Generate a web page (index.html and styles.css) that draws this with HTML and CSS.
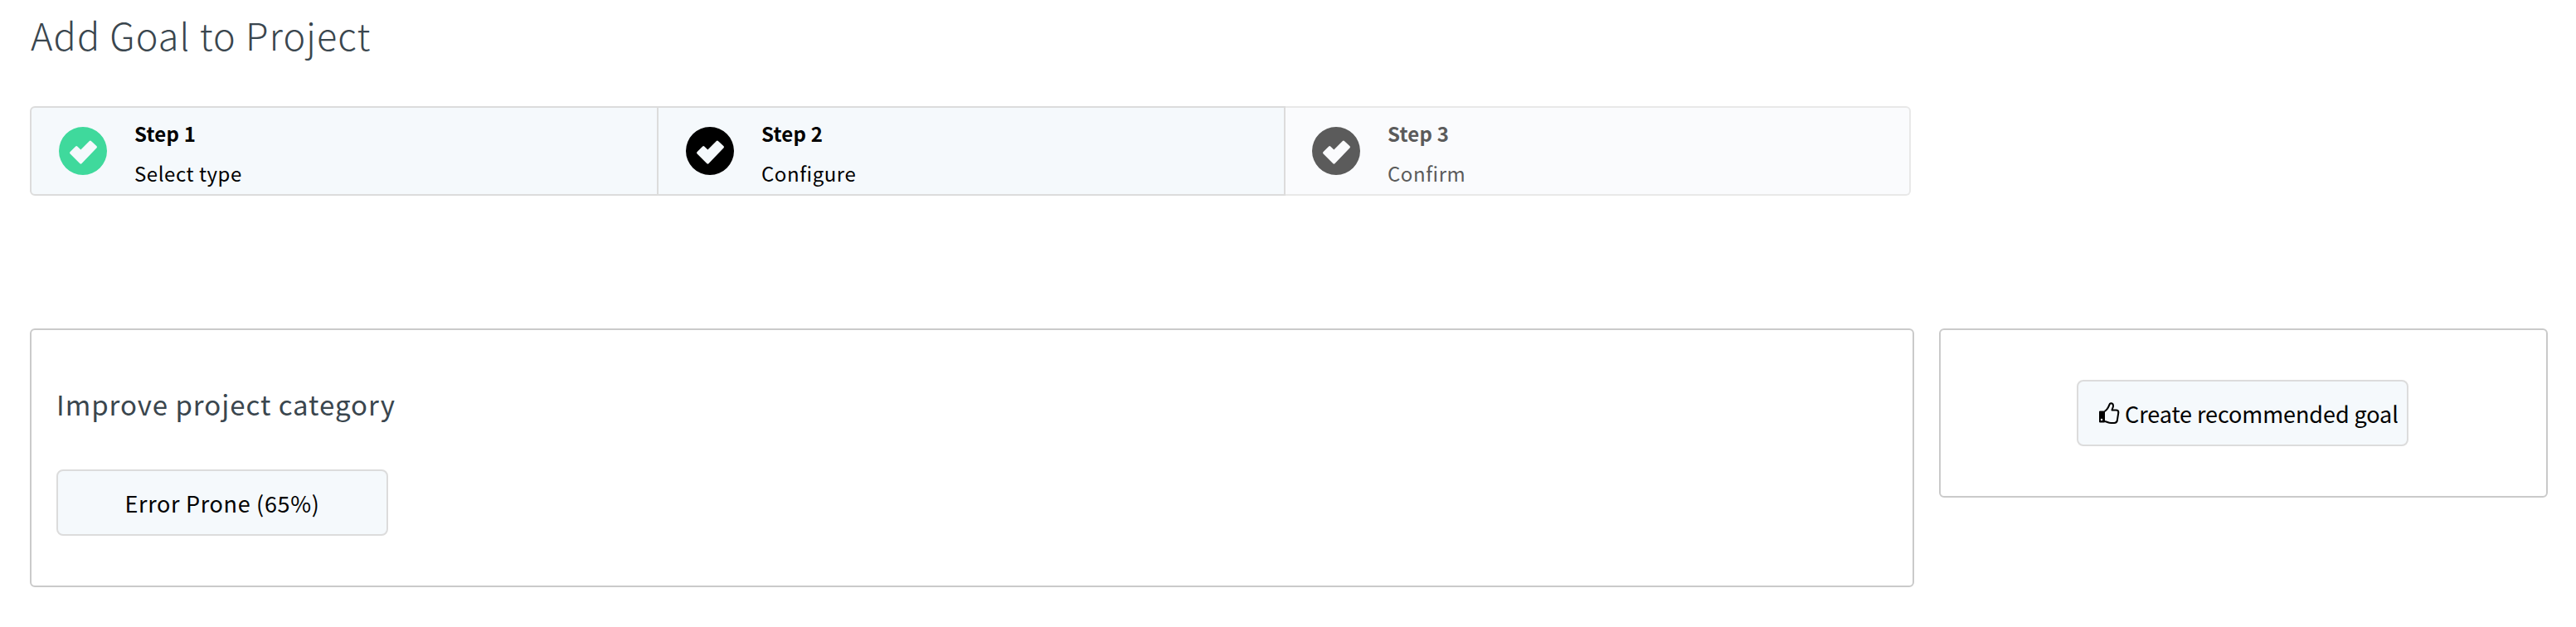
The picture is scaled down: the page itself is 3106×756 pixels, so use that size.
FILE: index.html
```
<!DOCTYPE html>
<html lang="en">
<head>
<meta charset="utf-8">
<title>Add Goal to Project</title>
<link rel="stylesheet" href="styles.css">
</head>
<body>
<svg width="0" height="0" class="defs"><defs>
<symbol id="check" viewBox="0 0 58 58"><path fill="currentColor" fill-rule="evenodd" d="M29 0a29 29 0 1 0 0 58a29 29 0 1 0 0-58zM45.600 23.200q.8 1 0 2L27.400 44.200q-1 .9-2 0L13.400 32.200q-.8-1 0-2L20.200 23.400q1-.8 2 0L26.400 27.600L36.900 17q1-.9 2 0z"/></symbol>
</defs></svg>
<h1 class="title">Add Goal to Project</h1>
<div class="steps">
<div class="step done"><svg class="check"><use href="#check"/></svg><div><div class="name"><span>Step 1</span></div><div class="desc"><span>Select type</span></div></div></div>
<div class="step"><svg class="check"><use href="#check"/></svg><div><div class="name"><span>Step 2</span></div><div class="desc"><span>Configure</span></div></div></div>
<div class="step disabled"><svg class="check"><use href="#check"/></svg><div><div class="name"><span>Step 3</span></div><div class="desc"><span>Confirm</span></div></div></div>
</div>
<main class="cards">
<section class="card category"><h2 class="heading"><span>Improve project category</span></h2><button class="btn"><span>Error Prone (65%)</span></button></section>
<aside class="card recommend"><button class="btn wide"><svg class="thumb" viewBox="0 0 26 28"><path d="M1.500 12h6v13h-6z" fill="currentColor" stroke="currentColor" stroke-width="1" stroke-linejoin="round"/><path d="M7.500 12C11 10.500 12 7 13.200 4.500C14 1 18 1.500 18 5.500C18 7.500 16.500 9 16.500 10.500h5q3 0 2.800 3L22.800 23q-.5 3-3.500 3h-4C11.500 26 10.500 24 7 24" fill="none" stroke="currentColor" stroke-width="2" stroke-linejoin="round"/><circle cx="4" cy="22" r="1.200" fill="#f5f9fc"/></svg><span>Create recommended goal</span></button></aside>
</main>
</body>
</html>
```
FILE: styles.css
```
* { box-sizing: border-box; }
body { margin: 0; padding: 0 34px 0 36px; background: #fff; color: #000; font-family: "Noto Sans CJK JP", "Noto Sans", sans-serif; font-size: 24px; white-space: nowrap; }
.defs { display: block; height: 0; }
.title { margin: 0; height: 128px; padding-left: 1px; font-size: 45px; line-height: 83px; font-weight: 300; letter-spacing: 1.12px; color: #3a464e; }
.steps { display: flex; width: 2268px; height: 108px; }
.step { display: flex; width: 756px; padding-left: 33px; border: 2px solid #dcdcdc; border-left-width: 0; background: #f5f9fc; }
.step:first-child { width: 758px; border-left-width: 2px; border-radius: 6px 0 0 6px; }
.step:not(.disabled) { border-right-color: #dcdcdc; }
.step.disabled { width: 754px; padding-left: 32px; border-color: #e8e8e8; border-radius: 0 6px 6px 0; background: #fafbfd; color: #5b5b5b; }
.check { width: 58px; height: 58px; margin: 23px 33px 0 0; flex: none; }
.done .check { color: #3fd99c; }
.name { font-weight: 700; height: 48px; line-height: 62px; letter-spacing: .2px; }
.desc { line-height: 62px; letter-spacing: .55px; }
.cards { display: flex; align-items: flex-start; gap: 30px; margin-top: 160px; }
.card { border: 2px solid #cacaca; border-radius: 6px; }
.category { width: 2272px; height: 312px; padding: 0 30px; }
.heading { margin: 0; height: 168px; padding-top: 55px; font-size: 33px; line-height: 69px; font-weight: 400; letter-spacing: .96px; color: #3a464e; }
.btn { display: flex; align-items: center; justify-content: center; width: 400px; height: 80px; padding: 0; border: 2px solid #dcdcdc; border-radius: 8px; background: #f5f9fc; color: #000; font: 400 27px "Noto Sans CJK JP", "Noto Sans", sans-serif; letter-spacing: .68px; }
.recommend { display: flex; justify-content: center; width: 734px; height: 204px; padding: 60px 2px 0 0; }
.wide { justify-content: flex-start; padding-left: 24px; letter-spacing: -.08px; }
.thumb { width: 26px; height: 28px; margin: 0 6px 0 0; flex: none; }
```
